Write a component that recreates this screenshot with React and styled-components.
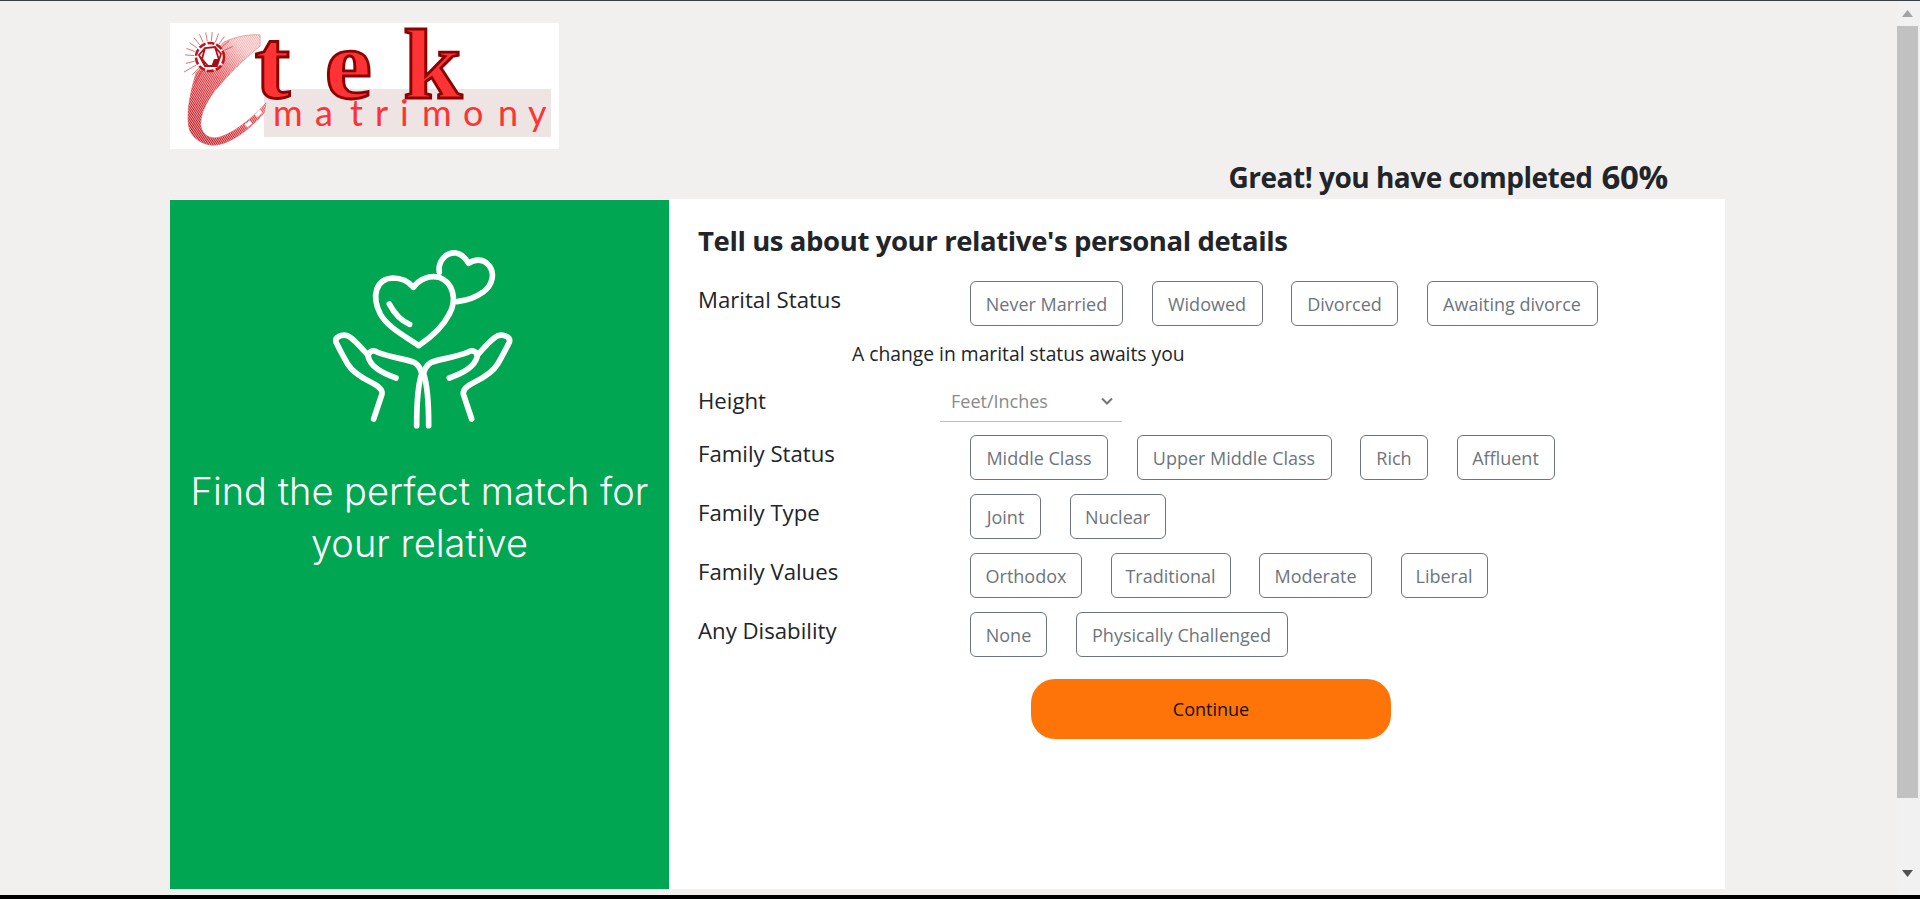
import React from 'react'
import styled, { createGlobalStyle } from 'styled-components'

const UI_FONT = '"Open Sans", "Noto Sans", sans-serif'

const GlobalStyle = createGlobalStyle`
    html, body {
        margin: 0;
        padding: 0;
        height: 100%;
        overflow: hidden;
        background: #f2f0ef;
    }
    * {
        box-sizing: border-box;
    }
`

const Screen = styled.div`
    height: 100vh;
    display: flex;
    flex-direction: column;
    font-family: ${UI_FONT};
    color: #212529;
    background: #f2f0ef;
`
const TopLine = styled.div`
    height: 1px;
    flex: none;
    background: #3c4043;
`
const BottomLine = styled.div`
    height: 4px;
    flex: none;
    background: #000;
`
const Middle = styled.div`
    flex: 1;
    min-height: 0;
    display: flex;
`
const Page = styled.main`
    flex: 1;
    min-width: 0;
    padding: 22px 172px 0 170px;
`
const ScrollTrack = styled.div`
    width: 23px;
    flex: none;
    background: #f1f1f1;
    display: flex;
    flex-direction: column;
    align-items: flex-start;
`
const ScrollArrow = styled.div`
    height: 25px;
    width: 21px;
    flex: none;
    display: flex;
    align-items: ${p => (p.$down ? 'flex-start' : 'center')};
    justify-content: center;
    svg {
        display: block;
    }
`
const ScrollThumb = styled.div`
    width: 21px;
    height: 772px;
    flex: none;
    background: #c1c1c1;
`
const ScrollSpacer = styled.div`
    flex: 1;
`
const LogoBox = styled.div`
    width: 389px;
    height: 126px;
    background: #fff;
    svg {
        display: block;
    }
`
const Progress = styled.div`
    height: 50px;
    padding: 5px 57px 0 0;
    display: flex;
    align-items: center;
    justify-content: flex-end;
    gap: 9px;
    font-size: 28px;
    font-weight: 700;
    letter-spacing: -0.5px;
    strong {
        font-size: 33px;
        font-weight: 700;
        letter-spacing: -0.3px;
    }
`
const Panel = styled.section`
    height: 690px;
    display: flex;
    background: #fff;
`
const Promo = styled.aside`
    width: 499px;
    flex: none;
    margin-top: 1px;
    background: #00a651;
    color: #fff;
    display: flex;
    flex-direction: column;
    align-items: center;
    padding-top: 44px;
    svg {
        display: block;
        margin-left: 3px;
    }
`
const PromoText = styled.p`
    margin: 31px 0 0;
    width: 480px;
    text-align: center;
    font-family: "Inter", sans-serif;
    font-size: 38px;
    font-weight: 300;
    line-height: 52px;
`
const Form = styled.div`
    flex: 1;
    padding: 24px 0 0 29px;
`
const Title = styled.h2`
    margin: 0 0 22px;
    font-size: 27.5px;
    line-height: 36px;
    font-weight: 700;
    letter-spacing: -0.39px;
`
const Row = styled.div`
    display: flex;
    align-items: flex-start;
    margin-bottom: ${p => p.$gap || 14}px;
`
const Label = styled.div`
    width: ${p => p.$width || 272}px;
    flex: none;
    font-size: 22.2px;
    line-height: 38px;
`
const Options = styled.div`
    display: flex;
    gap: 28.5px;
`
const Option = styled.button`
    width: ${p => p.$width}px;
    height: 45px;
    padding: 0;
    background: #fff;
    border: 1px solid #6c757d;
    border-radius: 6px;
    color: #6c757d;
    font-family: ${UI_FONT};
    font-size: 18px;
    white-space: nowrap;
    cursor: pointer;
`
const Note = styled.div`
    margin: 0 0 14px 154px;
    font-size: 19.3px;
    line-height: 28px;
`
const HeightSelect = styled.div`
    width: 182px;
    height: 38px;
    margin-top: 2px;
    padding: 0 8px 4px 11px;
    border-bottom: 1px solid #bdbdbd;
    display: flex;
    align-items: center;
    justify-content: space-between;
    color: #8a8a8a;
    font-size: 18px;
`
const ContinueRow = styled.div`
    display: flex;
    padding: 8px 0 0 333px;
`
const ContinueButton = styled.button`
    width: 360px;
    height: 60px;
    border: none;
    border-radius: 24px;
    background: #fe7408;
    color: #111;
    font-family: ${UI_FONT};
    font-size: 18px;
    cursor: pointer;
`

const RAY_ANGLES = [-175, -160, -145, -130, -115, -100, -85, -70, -55, -40, -25, 165, 150, 135, 120]
const RING_PATH = 'M90 12 C78 11 65 14 54 19 L26 50 C20 70 15 95 20 108 C25 118 36 123 46 122 C62 120 80 106 94 90 L96 80 C85 92 68 108 50 114 C40 117 33 112 31 104 C29 90 40 72 50 62 C60 50 72 38 90 23 Z'

function Logo() {
    return (
        <svg width="389" height="126" viewBox="0 0 389 126">
            <defs>
                <linearGradient id="band" gradientUnits="userSpaceOnUse" x1="18" y1="95" x2="80" y2="30">
                    <stop offset="0" stopColor="#c4121a" />
                    <stop offset="0.55" stopColor="#e23b40" />
                    <stop offset="1" stopColor="#f7b9b9" />
                </linearGradient>
                <pattern id="grain" width="1.6" height="1.6" patternUnits="userSpaceOnUse" patternTransform="rotate(30)">
                    <line x1="0.4" y1="0" x2="0.4" y2="1.6" stroke="#fff" strokeWidth="0.5" />
                </pattern>
            </defs>
            <rect x="94" y="66" width="287" height="48" fill="#ede4e3" />
            <path d={RING_PATH} fill="url(#band)" stroke="#d9363c" strokeWidth="0.5" />
            <path d={RING_PATH} fill="url(#grain)" />
            <path d="M86 93L91 88M76 103L81 99" stroke="#fff" strokeWidth="4" />
            <g stroke="#d8343a" strokeWidth="0.7">
                {RAY_ANGLES.map(a => {
                    const r = (a * Math.PI) / 180
                    const len = a % 30 === 0 ? 30 : 25
                    return (
                        <line
                            key={a}
                            x1={40 + 16 * Math.cos(r)}
                            y1={34 + 16 * Math.sin(r)}
                            x2={40 + len * Math.cos(r)}
                            y2={34 + len * Math.sin(r)}
                        />
                    )
                })}
            </g>
            <circle cx="40" cy="34" r="14" fill="#fff" stroke="#c4121a" strokeWidth="2.6" strokeDasharray="7 2" />
            <path
                d="M29 32L35 25L45 24L51 31L47 43L35 43ZM35 25L32 36L38 43M45 24L49 37L43 43"
                fill="none"
                stroke="#b80f16"
                strokeWidth="1.8"
            />
            <path d="M44 36L49 36L46 44L41 44Z" fill="#a80d13" />
            <g transform="scale(1.06 1)" fontFamily='"Liberation Serif", serif' fontWeight="700" fontSize="100" fill="#ff3333" stroke="#8b0000" strokeWidth="2.8">
                <text x="80" y="75">t</text>
                <text x="146" y="75">e</text>
                <text x="220" y="75">k</text>
            </g>
            <text
                x="103 145 180 205 230 252 293 328 358"
                y="103"
                fontFamily='"Lato", sans-serif'
                fontWeight="400"
                fontSize="36"
                fill="#ff3333"
            >
                matrimony
            </text>
        </svg>
    )
}

function HeartHands() {
    const hand = (
        <>
            <path d="M608 570 L633 495 C635 480 620 470 600 460 C570 445 545 430 530 405 C515 380 505 360 495 340 C490 325 510 315 530 320 C550 330 570 355 590 378" />
            <path d="M675 447 C640 435 600 415 592 385 C590 368 605 360 620 370 C660 385 700 390 730 400 C745 410 750 420 752 435 C740 470 737 540 737 590" />
        </>
    )
    return (
        <svg width="200" height="190" viewBox="450 45 600 570" fill="none" stroke="#fff" strokeWidth="17" strokeLinecap="round" strokeLinejoin="round">
            <path d="M743 350 C700 320 650 295 628 255 C600 200 615 150 665 147 C695 147 715 160 727 175 C745 150 775 138 805 145 C845 160 860 210 835 255 C815 295 780 325 743 350Z" />
            <path d="M805 130 C800 95 825 70 855 72 C875 75 885 90 893 103 C910 90 935 90 950 105 C975 130 965 170 935 190 C915 205 885 215 858 218" />
            <path d="M655 225 C668 250 690 275 716 286" />
            {hand}
            <g transform="translate(1510 0) scale(-1 1)">{hand}</g>
        </svg>
    )
}

const maritalOptions = [
    ['Never Married', 153],
    ['Widowed', 111],
    ['Divorced', 107],
    ['Awaiting divorce', 171],
]

const rows = [
    { label: 'Family Status', options: [['Middle Class', 138], ['Upper Middle Class', 195], ['Rich', 68], ['Affluent', 98]] },
    { label: 'Family Type', options: [['Joint', 71], ['Nuclear', 96]] },
    { label: 'Family Values', options: [['Orthodox', 112], ['Traditional', 120], ['Moderate', 113], ['Liberal', 87]] },
    { label: 'Any Disability', options: [['None', 77], ['Physically Challenged', 212]] },
]

export default function App() {
    return (
        <Screen>
            <GlobalStyle />
            <TopLine />
            <Middle>
                <Page>
                    <LogoBox>
                        <Logo />
                    </LogoBox>
                    <Progress>
                        <span>Great! you have completed</span>
                        <strong>60%</strong>
                    </Progress>
                    <Panel>
                        <Promo>
                            <HeartHands />
                            <PromoText>Find the perfect match for your relative</PromoText>
                        </Promo>
                        <Form>
                            <Title>Tell us about your relative's personal details</Title>
                            <Row>
                                <Label>Marital Status</Label>
                                <Options>
                                    {maritalOptions.map(([text, width]) => (
                                        <Option key={text} $width={width}>{text}</Option>
                                    ))}
                                </Options>
                            </Row>
                            <Note>A change in marital status awaits you</Note>
                            <Row $gap={13}>
                                <Label $width={242}>Height</Label>
                                <HeightSelect>
                                    Feet/Inches
                                    <svg width="14" height="14" viewBox="0 0 14 14" fill="none" stroke="#757575" strokeWidth="2">
                                        <path d="M2 4.5L7 9.5L12 4.5" />
                                    </svg>
                                </HeightSelect>
                            </Row>
                            {rows.map(r => (
                                <Row key={r.label}>
                                    <Label>{r.label}</Label>
                                    <Options>
                                        {r.options.map(([text, width]) => (
                                            <Option key={text} $width={width}>{text}</Option>
                                        ))}
                                    </Options>
                                </Row>
                            ))}
                            <ContinueRow>
                                <ContinueButton>Continue</ContinueButton>
                            </ContinueRow>
                        </Form>
                    </Panel>
                </Page>
                <ScrollTrack>
                    <ScrollArrow>
                        <svg width="11" height="7" viewBox="0 0 11 7"><path d="M5.5 0L11 7H0Z" fill="#a3a3a3" /></svg>
                    </ScrollArrow>
                    <ScrollThumb />
                    <ScrollSpacer />
                    <ScrollArrow $down>
                        <svg width="11" height="7" viewBox="0 0 11 7"><path d="M0 0H11L5.5 7Z" fill="#505050" /></svg>
                    </ScrollArrow>
                </ScrollTrack>
            </Middle>
            <BottomLine />
        </Screen>
    )
}
